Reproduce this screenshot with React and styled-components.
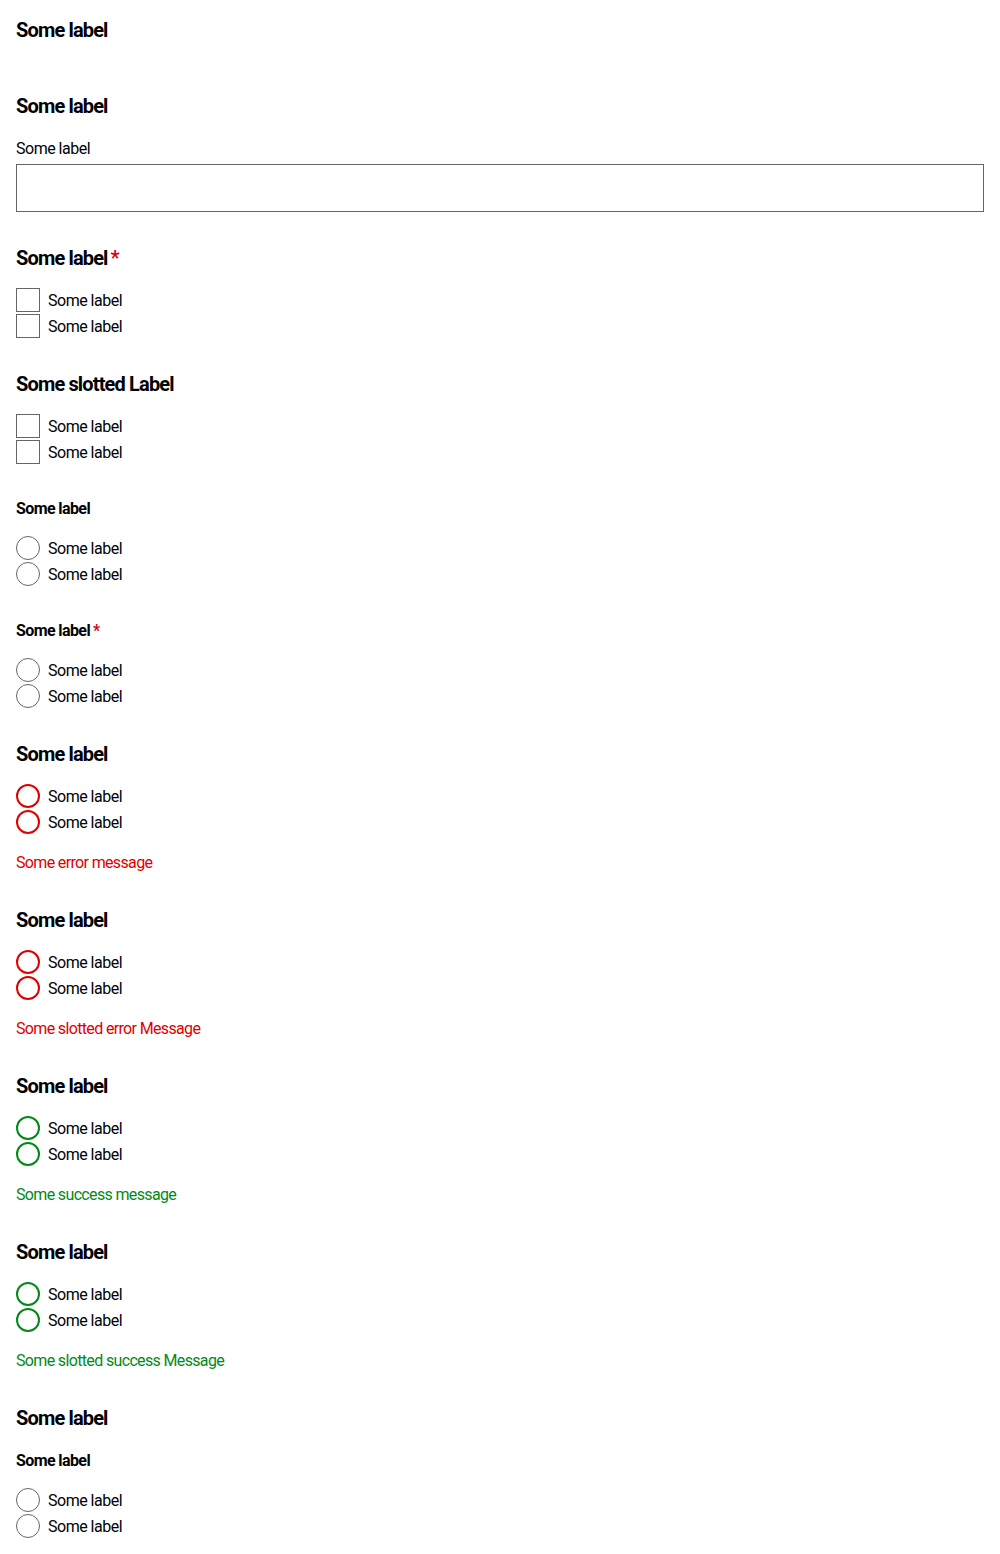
import React from 'react';
import styled, { createGlobalStyle } from 'styled-components';

const GlobalStyle = createGlobalStyle`
  html, body {
    margin: 0;
    padding: 0;
    background: #fff;
  }
  body {
    font-family: Roboto, "Liberation Sans", sans-serif;
    color: #010205;
  }
`;

const Page = styled.div`
  display: flex;
  flex-direction: column;
  gap: 32px;
  padding: 16px;
`;

const Fieldset = styled.fieldset`
  margin: 0;
  padding: 0;
  border: none;
  display: flex;
  flex-direction: column;
  gap: 16px;
  min-width: 0;
`;

const Legend = styled.div`
  font-size: ${p => (p.$small ? '16px' : '20px')};
  line-height: ${p => (p.$small ? '24px' : '28px')};
  padding-top: ${p => (p.$small ? '1px' : '0')};
  margin-bottom: ${p => (p.$small ? '-1px' : '0')};
  font-weight: 700;
  letter-spacing: ${p => (p.$small ? '-0.6px' : '-0.85px')};
  color: #010205;
`;

const Required = styled.span`
  color: #d5001c;
  margin-left: 3px;
  font-weight: 700;
`;

const EmptySlot = styled.div`
  height: 0;
`;

const TextField = styled.div`
  display: flex;
  flex-direction: column;
  gap: 4px;
`;

const FieldLabel = styled.label`
  font-size: 16px;
  line-height: 24px;
  padding-top: 1px;
  margin-bottom: -1px;
  letter-spacing: -0.5px;
`;

const Input = styled.input`
  box-sizing: border-box;
  height: 48px;
  width: 100%;
  margin: 0;
  border: 1px solid #626669;
  border-radius: 0;
  background: #fff;
  padding: 0 12px;
  font: inherit;
`;

const Options = styled.div`
  display: flex;
  flex-direction: column;
  gap: 2px;
`;

const Option = styled.label`
  display: flex;
  align-items: center;
  gap: 8px;
  height: 24px;
  font-size: 16px;
  line-height: 24px;
  letter-spacing: -0.5px;
  color: #010205;
`;

const OptionText = styled.span`
  padding-top: 2px;
`;

const Box = styled.span`
  box-sizing: border-box;
  width: 24px;
  height: 24px;
  flex: none;
  border: 1px solid #626669;
`;

const stateColor = {
  error: '#e00000',
  success: '#018a16',
};

const Circle = styled.span`
  box-sizing: border-box;
  width: 24px;
  height: 24px;
  flex: none;
  border-radius: 50%;
  border: ${p => (p.$state ? `2px solid ${stateColor[p.$state]}` : '1px solid #626669')};
`;

const Message = styled.div`
  font-size: 16px;
  line-height: 24px;
  padding-top: 1px;
  margin-bottom: -1px;
  letter-spacing: -0.65px;
  color: ${p => stateColor[p.$state]};
`;

const CheckboxGroup = () => (
  <Options>
    <Option><Box /><OptionText>Some label</OptionText></Option>
    <Option><Box /><OptionText>Some label</OptionText></Option>
  </Options>
);

const RadioGroup = ({ state }) => (
  <Options>
    <Option><Circle $state={state} /><OptionText>Some label</OptionText></Option>
    <Option><Circle $state={state} /><OptionText>Some label</OptionText></Option>
  </Options>
);

const StatusFieldset = ({ state, message }) => (
  <Fieldset>
    <Legend>Some label</Legend>
    <RadioGroup state={state} />
    <Message $state={state}>{message}</Message>
  </Fieldset>
);

export default function App() {
  return (
    <>
      <GlobalStyle />
      <Page>
        <Fieldset>
          <Legend>Some label</Legend>
          <EmptySlot />
        </Fieldset>

        <Fieldset>
          <Legend>Some label</Legend>
          <TextField>
            <FieldLabel>Some label</FieldLabel>
            <Input type="text" />
          </TextField>
        </Fieldset>

        <Fieldset>
          <Legend>Some label<Required>*</Required></Legend>
          <CheckboxGroup />
        </Fieldset>

        <Fieldset>
          <Legend>Some slotted Label</Legend>
          <CheckboxGroup />
        </Fieldset>

        <Fieldset>
          <Legend $small>Some label</Legend>
          <RadioGroup />
        </Fieldset>

        <Fieldset>
          <Legend $small>Some label<Required>*</Required></Legend>
          <RadioGroup />
        </Fieldset>

        <StatusFieldset state="error" message="Some error message" />
        <StatusFieldset state="error" message="Some slotted error Message" />
        <StatusFieldset state="success" message="Some success message" />
        <StatusFieldset state="success" message="Some slotted success Message" />

        <Fieldset>
          <Legend>Some label</Legend>
          <Fieldset>
            <Legend $small>Some label</Legend>
            <RadioGroup />
          </Fieldset>
        </Fieldset>
      </Page>
    </>
  );
}
